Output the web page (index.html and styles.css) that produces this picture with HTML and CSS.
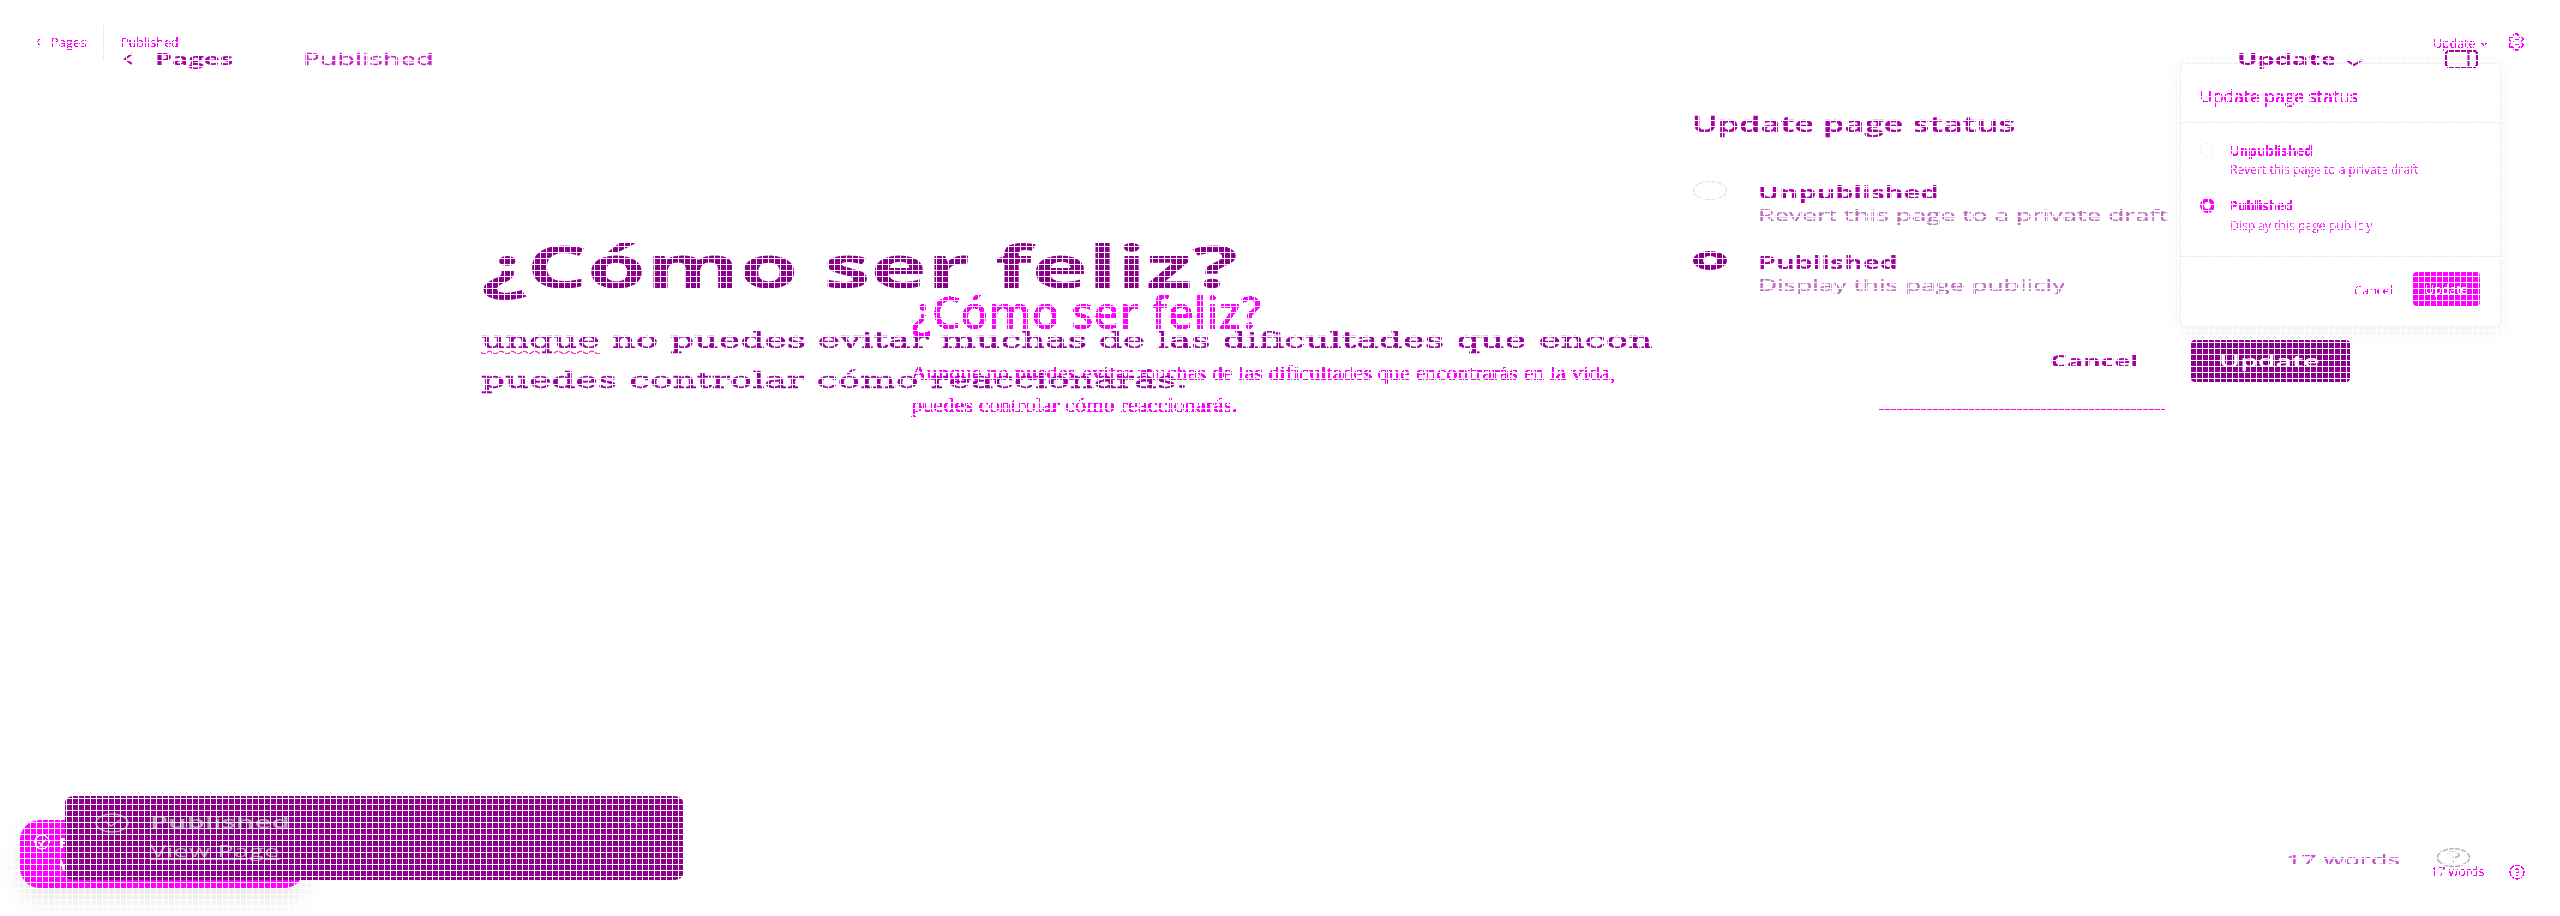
FILE: index.html
```html
<!DOCTYPE html>
<html lang="es">
<head>
<meta charset="utf-8">
<title>¿Cómo ser feliz?</title>
<link rel="stylesheet" href="styles.css">
</head>
<body>
<svg class="defs" width="0" height="0"><filter id="crisp" x="-5%" y="-10%" width="110%" height="120%" color-interpolation-filters="sRGB"><feComponentTransfer><feFuncA type="discrete" tableValues="0 0 1 1 1"/></feComponentTransfer></filter></svg>

<div class="layer base">
  <header class="b-head">
    <svg class="b-back crisp" width="5" height="8" viewBox="0 0 5 8"><path d="M4 .8L1 4l3 3.2"/></svg>
    <span class="txt t13 crisp" data-w="36">Pages</span>
    <i class="b-rule"></i>
    <span class="txt t13 crisp" data-w="58">Published</span>
    <span class="txt t13 crisp b-update" data-w="43">Update</span>
    <svg class="b-chev crisp" width="8" height="5" viewBox="0 0 8 5"><path d="M1 1l3 2.500L7 1"/></svg>
    <svg class="b-gear crisp" width="18" height="18" viewBox="0 0 18 18"><path d="M7 1.200h4v2l2 .8 1.700-.5 1.500 3-1.500 1.500v2l1.500 1.500-1.500 3-1.700-.5-2 .8v2H7v-2l-2-.8-1.700.5-1.500-3L3.300 10V8L1.800 6.500l1.500-3L5 4l2-.8zM11.500 6.500H8L6.500 9 8 11.500h3.500"/></svg>
  </header>
  <main class="b-main">
    <article class="b-post">
      <h1 class="txt crisp" data-w="350">¿Cómo ser feliz?</h1>
      <p class="txt crisp" data-w="704">Aunque no puedes evitar muchas de las dificultades que encontrarás en la vida,</p>
      <p class="txt crisp" data-w="327">puedes controlar cómo reaccionarás.</p>
    </article>
    <aside class="b-panel">
      <div class="b-title"><span class="txt crisp" data-w="158">Update page status</span></div>
      <div class="b-options">
        <div class="b-option"><i class="b-radio"></i><div><b class="txt crisp" data-w="83">Unpublished</b><span class="txt small crisp" data-w="189">Revert this page to a private draft</span></div></div>
        <div class="b-option second"><i class="b-radio on"></i><div><b class="txt crisp" data-w="63">Published</b><span class="txt small low crisp" data-w="142">Display this page publicly</span></div></div>
      </div>
      <div class="b-actions"><span class="txt t13 med crisp" data-w="39">Cancel</span><div class="b-button"><span class="txt t13 med crisp" data-w="43">Update</span></div></div>
    </aside>
  </main>
  <footer class="b-foot">
    <div class="b-toast">
      <svg class="crisp" width="16" height="16" viewBox="0 0 16 16"><circle cx="8" cy="8" r="7"/><path d="M4.500 8l2.500 3 5-6"/></svg>
      <div><b class="txt crisp" data-w="62">Published</b><b class="txt crisp" data-w="62">View Page</b></div>
    </div>
    <span class="txt b-count crisp" data-w="53">17 words</span>
    <svg class="b-help crisp" width="16" height="16" viewBox="0 0 16 16"><circle cx="8" cy="8" r="7"/><path d="M5.800 6.500Q6 4.800 8 4.800T10 6.500 8 8.500V9.500M8 11v1"/></svg>
  </footer>
</div>

<div class="layer wide">
  <header class="w-head">
    <svg class="w-back" width="11" height="12" viewBox="0 0 11 12"><path d="M9 1L2 6l7 5"/></svg>
    <b class="txt" data-w="79">Pages</b>
    <span class="txt w-state" data-w="131">Published</span>
    <b class="txt w-update" data-w="99">Update</b>
    <svg class="w-chev" width="18" height="8" viewBox="0 0 18 8"><path d="M1 1l8 5 8-5"/></svg>
    <svg class="w-side" width="33" height="18" viewBox="0 0 33 18"><path d="M3 1h27l2 2v12l-2 2H3l-2-2V3zM23.500 1v16"/></svg>
  </header>
  <main class="w-main">
    <article class="w-post">
      <h1 class="txt" data-w="757">¿Cómo ser feliz?</h1>
      <p class="txt" data-w="1172"><u>unque</u> no puedes evitar muchas de las dificultades que encon</p>
      <p class="txt" data-w="707">puedes controlar cómo reaccionarás.</p>
    </article>
    <aside class="w-panel">
      <div class="txt w-title" data-w="324">Update page status</div>
      <div class="w-option"><i class="w-radio"></i><div><b class="txt" data-w="181">Unpublished</b><span class="txt" data-w="410">Revert this page to a private draft</span></div></div>
      <div class="w-option second"><i class="w-radio on"></i><div><b class="txt" data-w="140">Published</b><span class="txt" data-w="307">Display this page publicly</span></div></div>
      <div class="w-actions"><b class="txt" data-w="89">Cancel</b><div class="w-button"><b class="txt" data-w="100">Update</b></div></div>
      <div class="w-line"></div>
    </aside>
  </main>
  <footer class="w-foot">
    <div class="w-toast">
      <svg class="w-check" width="34" height="20" viewBox="0 0 34 20"><ellipse cx="17" cy="10" rx="16" ry="9"/><path d="M10 8l6 5 9-6"/></svg>
      <div><b class="txt" data-w="139">Published</b><u class="txt" data-w="130">View Page</u></div>
      <svg class="w-close" width="16" height="11" viewBox="0 0 16 11"><path d="M1 1l14 9M15 1L1 10"/></svg>
    </div>
    <span class="txt w-count" data-w="114">17 words</span>
    <svg class="w-help" width="35" height="21" viewBox="0 0 35 21"><ellipse cx="17.500" cy="10.500" rx="16" ry="9"/><path d="M12 7q1-2 5.500-2t5.500 2.500-5.500 3v1.500M17.500 14v1.500"/></svg>
  </footer>
</div>
<div class="mesh"></div>
<script src="fit.js"></script>
</body>
</html>
```
FILE: styles.css
```css
* { box-sizing: border-box; }
body { margin: 0; width: 2560px; height: 916px; overflow: hidden; position: relative; background: #fff; font-family: "Open Sans", "Noto Sans", sans-serif; }
.defs { position: absolute; }
.layer { position: absolute; inset: 0; width: 2560px; height: 916px; overflow: hidden; }
.mesh { position: absolute; inset: 0; background: linear-gradient(to right, #fff 1px, transparent 1px) 0 0 / 6px 6px, linear-gradient(#fff 1px, transparent 1px) 0 0 / 6px 6px; }
.txt { display: block; flex: none; width: max-content; white-space: nowrap; transform-origin: 0 0; margin-top: 0; margin-bottom: 0; }
.crisp { filter: url(#crisp); }
svg { flex: none; fill: none; }
header, main, footer { display: flex; align-items: flex-start; }

.base { color: #f0f; }
.base svg { stroke: #f0f; stroke-width: 1.2; }
.t13 { font-size: 13px; line-height: 16px; }
.med { font-weight: 500; }
.b-head { height: 63px; padding: 34px 0 0 36px; }
.b-back { margin: 4px 10px 0 0; }
.b-rule { width: 1px; height: 35px; margin: -9px 17px 0 16px; background: #e5ecf3; }
.b-head .b-update { margin: 1px 0 0 2255px; }
.b-chev { margin: 8px 0 0 4px; }
.b-gear { margin: -1px 0 0 19px; }
.b-main { height: 757px; }
.b-post { width: 1269px; margin-left: 911px; padding-top: 218px; }
.b-post h1 { font-size: 46px; font-weight: 600; line-height: 60px; margin-bottom: 16px; }
.b-post p { font: 21px/32px "Liberation Serif", serif; -webkit-text-stroke: .3px #f0f; }
.b-panel { width: 321px; height: 264px; background: #fff; border: 1px solid #eceeef; border-radius: 4px; box-shadow: 0 4px 16px rgba(40, 60, 50, .09); }
.b-title { height: 59px; padding: 20px 0 0 19px; border-bottom: 1px solid #e5ecf3; font-size: 18px; line-height: 24px; -webkit-text-stroke: .2px #f0f; }
.b-options { height: 134px; padding: 18px 0 0 19px; border-bottom: 1px solid #e5ecf3; }
.b-option { display: flex; font-size: 14px; line-height: 20px; }
.b-option.second { margin-top: 16px; }
.b-option .small { font-size: 12.5px; margin-top: -1px; opacity: .8; }
.b-option .low { margin-top: 0; }
.b-radio { width: 15px; height: 15px; margin: 2px 15px 0 0; border: 1px solid #e8ecef; border-radius: 50%; }
.b-radio.on { border: 4px solid #f0f; }
.b-actions { display: flex; padding: 15px 0 0 173px; }
.b-actions > .txt { margin-top: 10px; }
.b-button { width: 67px; height: 34px; margin-left: 20px; padding: 9px 0 0 12px; background: #f0f; border-radius: 4px; color: #fff; }
.b-foot { height: 96px; }
.b-toast { display: flex; width: 284px; height: 68px; margin-left: 20px; padding: 14px; background: #f0f; border-radius: 20px; color: #fff; box-shadow: 0 12px 24px rgba(30, 30, 30, .12); font-size: 14px; line-height: 22px; }
.b-toast svg { stroke: #fff; margin: 0 10px 0 0; }
.b-toast div { margin-top: -2px; }
.b-count { font-size: 12px; line-height: 16px; margin-left: 2127px; margin-top: 44px; }
.b-help { margin: 44px 0 0 25px; }

.wide { color: #a600a6; font-size: 16.5px; line-height: 20px; }
.wide svg { stroke: #a800a8; stroke-width: 2; }
.w-head { height: 110px; padding: 49px 0 0 123px; }
.w-back { margin: 4px 21px 0 0; }
.w-state { margin-left: 69px; color: #c81fc8; -webkit-text-stroke: .3px #c81fc8; }
.w-update { margin-left: 1804px; }
.w-chev { margin: 10px 0 0 8px; }
.w-side { margin: 1px 0 0 82px; }
.w-main { height: 686px; }
.w-post { width: 1211px; margin-left: 481px; padding-top: 120px; }
.w-post h1 { margin-left: 0; margin-bottom: 20px; color: #8b008b; font-size: 59px; line-height: 70px; }
.w-post p { color: #9800a2; font: 23px/40px "DejaVu Serif", serif; -webkit-text-stroke: .5px #9800a2; }
.w-post u { text-decoration: underline wavy #f019a8 1px; text-underline-offset: 2px; }
.w-title { font-size: 21.5px; line-height: 28px; font-weight: 600; -webkit-text-stroke: .3px #a600a6; }
.w-panel { width: 800px; }
.w-option { display: flex; margin-top: 43px; line-height: 20px; }
.w-option.second { margin-top: 26px; }
.w-option b { font-size: 17.5px; font-weight: 700; margin-top: 1px; }
.w-option span { margin-top: 3px; font-size: 16px; color: #bd6cc2; -webkit-text-stroke: .2px #bd6cc2; }
.w-radio { width: 34px; height: 19px; margin: 0 31px 0 1px; border: 1px solid #ddd; border-radius: 50%; }
.w-radio.on { border-width: 5px 10px; border-color: #8b008b; }
.w-actions { display: flex; margin: 45px 0 0 358px; }
.w-actions > b { margin-top: 11px; }
.w-button { width: 159px; height: 42px; margin-left: 52px; padding: 11px 0 0 28px; border-radius: 4px; background: #8b008b; color: #fff; }
.w-button b { font-weight: 600; }
.w-line { width: 286px; height: 1px; margin: 27px 0 0 187px; background: #f0f; }
.w-foot { height: 120px; }
.w-toast { display: flex; width: 618px; height: 84px; margin-left: 65px; padding: 17px 0 0 30px; border-radius: 9px / 6px; background: #8b008b; color: #b8a0b8; }
.wide .w-toast svg { stroke: #b8a0b8; stroke-width: 1.5; }
.w-toast div { width: 475px; margin-left: 21px; margin-top: -1px; }
.w-toast u { margin-top: 9px; text-decoration-thickness: 1px; text-underline-offset: 2px; }
.w-toast b { font-weight: 600; }
.wide .w-toast .w-close { margin-top: 3px; stroke: #c43cc4; stroke-width: 1; }
.w-count { font-size: 14.5px; margin: 54px 0 0 1603px; color: #c44bc9; -webkit-text-stroke: .2px #c44bc9; }
.w-help { margin: 51px 0 0 36px; }
.wide .w-help { stroke: #c0b0c0; stroke-width: 1.7; }
```
FILE: fit.js
```js
document.querySelectorAll('[data-w]').forEach(function (el) {
  var natural = el.offsetWidth;
  var target = Number(el.dataset.w);
  el.style.transform = 'scaleX(' + target / natural + ')';
  el.style.marginRight = (target - natural) + 'px';
});
```
